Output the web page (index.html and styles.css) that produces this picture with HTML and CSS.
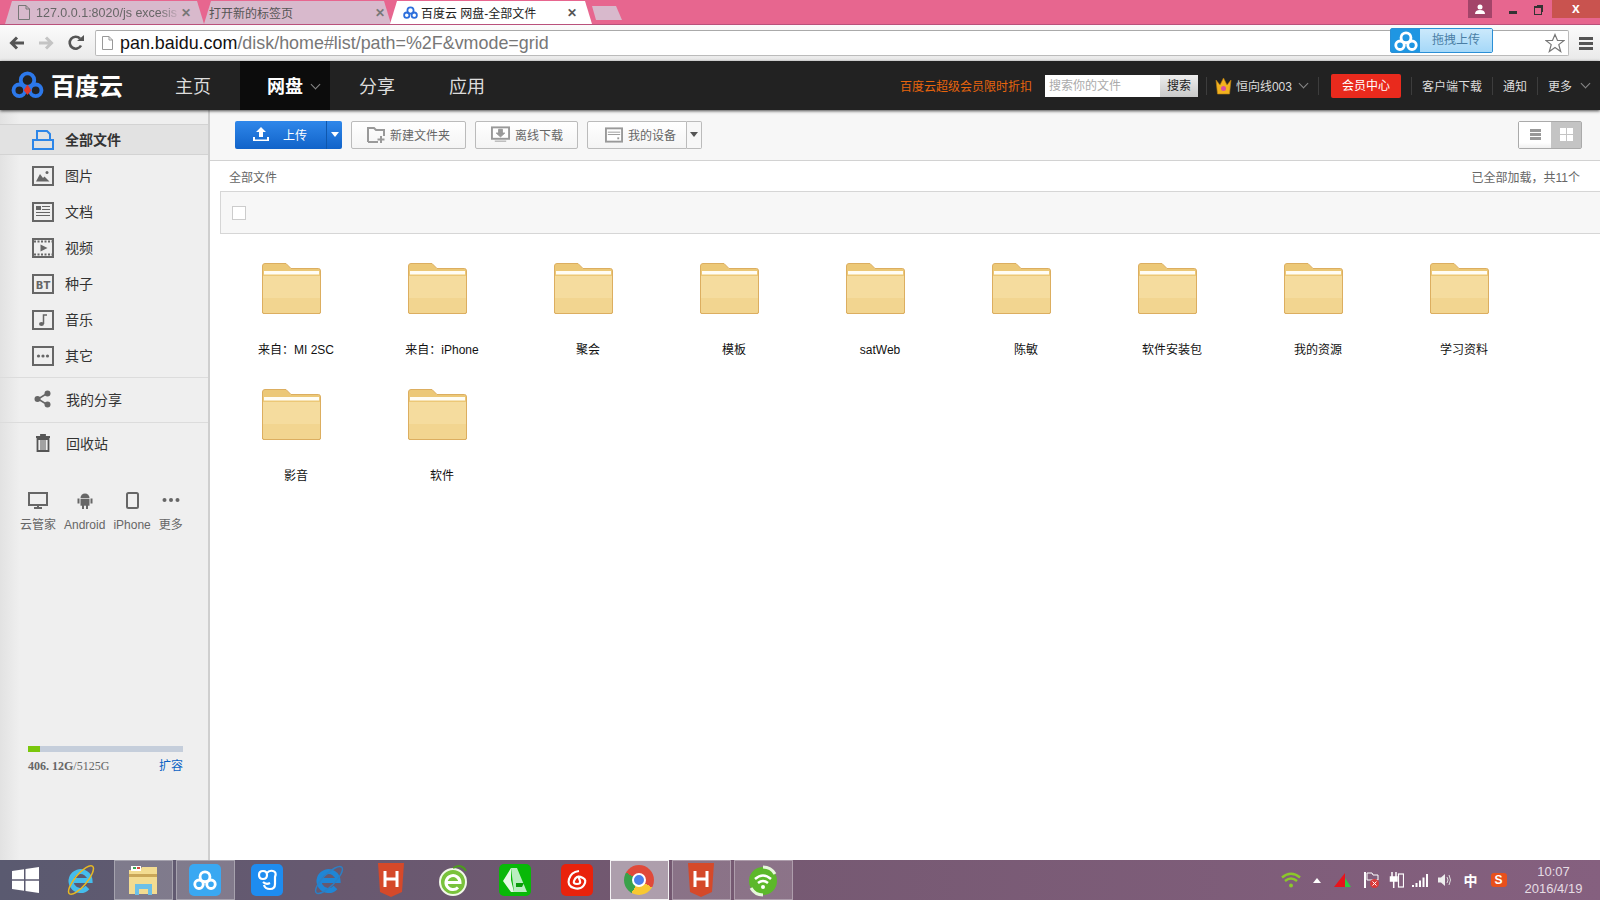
FILE: index.html
```html
<!DOCTYPE html>
<html lang="zh-CN">
<head>
<meta charset="UTF-8">
<title>百度云 网盘-全部文件</title>
<link rel="stylesheet" href="styles.css">
</head>
<body>

<svg class="defs" width="0" height="0">
    <symbol id="cloud" viewBox="0 0 34 28">
        <circle cx="8.500" cy="20" r="6" fill="none" stroke="currentColor" stroke-width="4"/>
        <circle cx="25.500" cy="20" r="6" fill="none" stroke="currentColor" stroke-width="4"/>
        <circle cx="17" cy="9.500" r="7" fill="none" stroke="currentColor" stroke-width="4"/>
    </symbol>
    <symbol id="folder" viewBox="0 0 59 51">
        <path d="M.5 3Q.5.5 3 .5H24L29 5.500H56.500Q58.500 5.500 58.500 8V49Q58.500 50.500 57 50.500H2Q.5 50.500.5 49Z" fill="#ecc877" stroke="#dcae60"/>
        <rect x="1" y="13" width="57" height="37" fill="#f5dc9e"/>
        <rect x="1" y="35" width="57" height="15" fill="#f2d590"/>
        <rect x="2" y="8" width="55" height="3.500" fill="#fffdf5"/>
        <path d="M.5 8V49Q.5 50.500 2 50.500H57Q58.500 50.500 58.500 49V8" fill="none" stroke="#dcae60"/>
    </symbol>
    <symbol id="frame" viewBox="0 0 22 20">
        <rect x="1" y="1" width="20" height="18" fill="none" stroke="currentColor" stroke-width="2"/>
    </symbol>
    <symbol id="html" viewBox="0 0 26 34">
        <path d="M0 0H26L24 29L13 34L2 29Z" fill="#d5492a"/>
        <path d="M7 8V24M19 8V24M7 16H19" fill="none" stroke="#fff" stroke-width="3"/>
    </symbol>
</svg>

<div class="tabs">
    <div class="tab tab-first">
        <svg class="tab-icon" width="12" height="15" viewBox="0 0 12 15"><path d="M.5.5H8L11.500 4V14.500H.5Z" fill="none" stroke="#777"/><path d="M8 .5V4H11.500" fill="none" stroke="#777"/></svg>
        <span class="tab-title tab-fade">127.0.0.1:8020/js excesis</span>
        <span class="tab-close">✕</span>
    </div>
    <div class="tab tab-second">
        <span class="tab-title">打开新的标签页</span>
        <span class="tab-close">✕</span>
    </div>
    <div class="tab tab-active">
        <svg class="tab-logo" width="15" height="13"><use href="#cloud"/></svg>
        <span class="tab-title">百度云 网盘-全部文件</span>
        <span class="tab-close">✕</span>
    </div>
    <div class="tab-new"></div>
    <div class="win-controls">
        <div class="win-profile">
            <svg width="10" height="10" viewBox="0 0 10 10"><circle cx="5" cy="3" r="2.500" fill="#fff"/><path d="M0 10Q0 6 5 6T10 10Z" fill="#fff"/></svg>
        </div>
        <div class="win-min"></div>
        <div class="win-restore"></div>
        <div class="win-close">x</div>
    </div>
</div>

<div class="toolbar">
    <svg class="tool-icon" width="16" height="14" viewBox="0 0 16 14"><path d="M15 7H3M8 1.500 2.500 7 8 12.500" fill="none" stroke="#555" stroke-width="3"/></svg>
    <svg class="tool-icon tool-forward" width="16" height="14" viewBox="0 0 16 14"><path d="M1 7H13M8 1.500 13.500 7 8 12.500" fill="none" stroke="#c4c4c4" stroke-width="3"/></svg>
    <svg class="tool-icon tool-reload" width="16" height="16" viewBox="0 0 16 16"><path d="M13 10.500A6 6 0 1 1 12 3.500" fill="none" stroke="#555" stroke-width="2.600"/><path d="M9 6H16V0Z" fill="#555"/></svg>
    <div class="address">
        <svg class="address-doc" width="11" height="14" viewBox="0 0 11 14"><path d="M.5.5H7L10.500 4V13.500H.5Z" fill="#fff" stroke="#999"/><path d="M7 .5V4H10.500" fill="none" stroke="#999"/></svg>
        <span class="url"><span class="url-host">pan.baidu.com</span>/disk/home#list/path=%2F&amp;vmode=grid</span>
        <svg class="star" width="20" height="20" viewBox="0 0 20 20"><path d="M10 1.500 12.500 7.500H19L13.800 11.600 15.700 18.500 10 14.500 4.300 18.500 6.200 11.600 1 7.500H7.500Z" fill="#fff" stroke="#777" stroke-width="1.200"/></svg>
        <div class="drag-upload">
            <div class="drag-logo"><svg width="24" height="20"><use href="#cloud"/></svg></div>
            <div class="drag-text">拖拽上传</div>
        </div>
    </div>
    <div class="menu-icon"><i></i><i></i><i></i></div>
</div>

<div class="nav">
    <div class="logo">
        <svg class="logo-mark" width="33" height="27" viewBox="0 0 34 28">
            <use href="#cloud"/>
            <path d="M17 14 21 20 17 25 13 20Z" fill="#e0392b"/>
        </svg>
        <span class="logo-text">百度云</span>
    </div>
    <a class="nav-link">主页</a>
    <a class="nav-link nav-active">网盘<span class="chev nav-chev"></span></a>
    <a class="nav-link">分享</a>
    <a class="nav-link nav-last">应用</a>
    <div class="nav-right">
        <span class="promo">百度云超级会员限时折扣</span>
        <div class="search">
            <span class="search-input">搜索你的文件</span>
            <span class="search-btn">搜索</span>
        </div>
        <span class="nav-sep sep-narrow"></span>
        <svg class="crown" width="17" height="18" viewBox="0 0 17 18">
            <path d="M1 3 5 8 8.500 1 12 8 16 3 14.500 17H2.500Z" fill="#f2b21f" stroke="#b97d10" stroke-width=".6"/>
            <circle cx="8.500" cy="11.500" r="2.500" fill="#d84fa0"/>
        </svg>
        <span class="nav-text user-name">恒向线003</span>
        <span class="chev user-chev"></span>
        <span class="nav-sep sep-wide"></span>
        <span class="vip">会员中心</span>
        <span class="nav-sep"></span>
        <span class="nav-text">客户端下载</span>
        <span class="nav-sep"></span>
        <span class="nav-text">通知</span>
        <span class="nav-sep"></span>
        <span class="nav-text">更多</span>
        <span class="chev more-chev"></span>
    </div>
</div>

<div class="main">
    <div class="sidebar">
        <div class="side-item side-active">
            <svg class="side-icon" width="22" height="20" viewBox="0 0 22 20"><path d="M5 10V1H15L18 4V10M1 10H21V19H1Z" fill="none" stroke="#2d86e8" stroke-width="2"/></svg>
            全部文件
        </div>
        <div class="side-group">
            <div class="side-item">
                <svg class="side-icon" width="22" height="20" viewBox="0 0 22 20"><use href="#frame"/><path d="M4 15.500 8 8 11 12 12.500 10.500 17.500 15.500Z" fill="currentColor"/><circle cx="15" cy="6.500" r="1.500" fill="currentColor"/></svg>
                图片
            </div>
            <div class="side-item">
                <svg class="side-icon" width="22" height="20" viewBox="0 0 22 20"><use href="#frame"/><rect x="4" y="4" width="5" height="4" fill="currentColor"/><path d="M10 4.500H18M10 7.500H18M4 10.500H18M4 13.500H18" stroke="currentColor"/></svg>
                文档
            </div>
            <div class="side-item">
                <svg class="side-icon" width="22" height="20" viewBox="0 0 22 20"><use href="#frame"/><path d="M2 3.500H20M2 16.500H20" stroke="currentColor" stroke-width="2" stroke-dasharray="2 1.500"/><path d="M8.500 6.500 15.500 10 8.500 13.500Z" fill="currentColor"/></svg>
                视频
            </div>
            <div class="side-item">
                <svg class="side-icon" width="22" height="20" viewBox="0 0 22 20"><use href="#frame"/><text class="bt-text" x="11" y="14.500" text-anchor="middle">BT</text></svg>
                种子
            </div>
            <div class="side-item">
                <svg class="side-icon" width="22" height="20" viewBox="0 0 22 20"><use href="#frame"/><ellipse cx="9.500" cy="14" rx="2.500" ry="2" fill="currentColor"/><path d="M11.500 14V5H15" fill="none" stroke="currentColor" stroke-width="1.500"/></svg>
                音乐
            </div>
            <div class="side-item">
                <svg class="side-icon" width="22" height="20" viewBox="0 0 22 20"><use href="#frame"/><circle cx="6.500" cy="10" r="1.600" fill="currentColor"/><circle cx="11" cy="10" r="1.600" fill="currentColor"/><circle cx="15.500" cy="10" r="1.600" fill="currentColor"/></svg>
                其它
            </div>
        </div>
        <div class="side-share">
            <svg class="side-icon side-icon-small" width="22" height="18" viewBox="0 0 22 18"><path d="M15 3.500 6 9 15 14.500" fill="none" stroke="currentColor" stroke-width="1.500"/><circle cx="15.500" cy="3.500" r="3" fill="currentColor"/><circle cx="5.500" cy="9" r="3" fill="currentColor"/><circle cx="15.500" cy="14.500" r="3" fill="currentColor"/></svg>
            我的分享
        </div>
        <div class="side-trash">
            <svg class="side-icon side-icon-small" width="22" height="18" viewBox="0 0 22 18"><path d="M4 3H18M9 3V1H13V3" fill="none" stroke="#555" stroke-width="1.800"/><path d="M5.500 5H16.500V17H5.500Z" fill="none" stroke="#555" stroke-width="1.800"/><path d="M9 6V16M11 6V16M13 6V16" stroke="#555"/></svg>
            回收站
        </div>
        <div class="apps">
            <div class="app">
                <svg width="20" height="17" viewBox="0 0 20 17"><rect x="1" y="1" width="18" height="12" fill="none" stroke="#666" stroke-width="2"/><path d="M6 16H14M10 13V16" stroke="#666" stroke-width="2"/></svg>
                <span>云管家</span>
            </div>
            <div class="app">
                <svg width="16" height="17" viewBox="0 0 16 17"><path d="M3.500 6A4.500 4.500 0 0 1 12.500 6Z" fill="#666"/><rect x="3.500" y="6.700" width="9" height="7" fill="#666"/><path d="M6 13V17M10 13V17M1.500 6.500V11.500M14.500 6.500V11.500" stroke="#666" stroke-width="2"/></svg>
                <span>Android</span>
            </div>
            <div class="app">
                <svg width="13" height="17" viewBox="0 0 13 17"><rect x="1" y="1" width="11" height="15" rx="1.500" fill="none" stroke="#666" stroke-width="2"/></svg>
                <span>iPhone</span>
            </div>
            <div class="app">
                <svg width="18" height="17" viewBox="0 0 18 17"><circle cx="2.500" cy="8" r="2" fill="#666"/><circle cx="9" cy="8" r="2" fill="#666"/><circle cx="15.500" cy="8" r="2" fill="#666"/></svg>
                <span>更多</span>
            </div>
        </div>
        <div class="storage">
            <div class="storage-bar"><div class="storage-used"></div></div>
            <div class="storage-info">
                <span class="storage-text"><b>406. 12G</b>/5125G</span>
                <a class="expand">扩容</a>
            </div>
        </div>
    </div>

    <div class="content">
        <div class="actions">
            <div class="btn-upload">
                <span class="upload-main">
                    <svg width="18" height="15" viewBox="0 0 18 15"><path d="M9 0 14 5H11V10H7V5H4ZM1 10V14H17V10" fill="#fff"/><path d="M3 10V12.500H15V10" fill="#1a71d6"/></svg>
                    <span class="upload-label">上传</span>
                </span>
                <span class="upload-drop"><i class="caret caret-white"></i></span>
            </div>
            <div class="btn btn-folder">
                <svg width="18" height="16" viewBox="0 0 18 16"><path d="M1 15V1H7L9 3H17V9M11 15H1" fill="none" stroke="#999" stroke-width="2"/><path d="M14 9V16M10.500 12.500H17.500" stroke="#999" stroke-width="2"/></svg>
                新建文件夹
            </div>
            <div class="btn btn-offline">
                <svg width="19" height="17" viewBox="0 0 20 17"><rect x="1" y="1" width="18" height="12" fill="#fff" stroke="#999" stroke-width="2"/><path d="M8 3H12V7H14.500L10 11 5.500 7H8ZM4 15.500H16" fill="#999" stroke="#999"/></svg>
                离线下载
            </div>
            <div class="btn-device">
                <span class="btn device-main">
                    <svg width="18" height="16" viewBox="0 0 19 16"><rect x="1" y="1" width="17" height="14" fill="#fff" stroke="#999" stroke-width="2"/><path d="M3 5H16M3 7.500H16" stroke="#999"/><rect x="13" y="10.500" width="2" height="2" fill="#999"/></svg>
                    我的设备
                </span>
                <span class="device-drop"><i class="caret"></i></span>
            </div>
            <div class="view-toggle">
                <span class="view-list"><i></i><i></i><i></i></span>
                <span class="view-grid"><i></i><i></i><i></i><i></i></span>
            </div>
        </div>
        <div class="crumbs">
            <span>全部文件</span>
            <span>已全部加载&#xFF0C;共11个</span>
        </div>
        <div class="select-bar"><span class="checkbox"></span></div>
        <div class="grid">
            <div class="file"><svg width="59" height="51"><use href="#folder"/></svg><span>来自&#xFF1A;MI 2SC</span></div>
            <div class="file"><svg width="59" height="51"><use href="#folder"/></svg><span>来自&#xFF1A;iPhone</span></div>
            <div class="file"><svg width="59" height="51"><use href="#folder"/></svg><span>聚会</span></div>
            <div class="file"><svg width="59" height="51"><use href="#folder"/></svg><span>模板</span></div>
            <div class="file"><svg width="59" height="51"><use href="#folder"/></svg><span>satWeb</span></div>
            <div class="file"><svg width="59" height="51"><use href="#folder"/></svg><span>陈敏</span></div>
            <div class="file"><svg width="59" height="51"><use href="#folder"/></svg><span>软件安装包</span></div>
            <div class="file"><svg width="59" height="51"><use href="#folder"/></svg><span>我的资源</span></div>
            <div class="file"><svg width="59" height="51"><use href="#folder"/></svg><span>学习资料</span></div>
            <div class="file"><svg width="59" height="51"><use href="#folder"/></svg><span>影音</span></div>
            <div class="file"><svg width="59" height="51"><use href="#folder"/></svg><span>软件</span></div>
        </div>
    </div>
</div>

<div class="taskbar">
    <div class="start">
        <svg width="27" height="26" viewBox="0 0 27 26"><path d="M0 4 12 2.300V12.300H0ZM13.500 2 27 0V12.300H13.500ZM0 13.700H12V23.700L0 22ZM13.500 13.700H27V26L13.500 24Z" fill="#fff"/></svg>
    </div>
    <div class="task">
        <svg width="32" height="32" viewBox="0 0 32 32"><path d="M7 16.500H25A9.500 9.500 0 1 0 22.500 23.500" fill="none" stroke="#45bdec" stroke-width="5"/><ellipse cx="16" cy="16" rx="18" ry="6" transform="rotate(-50 16 16)" fill="none" stroke="#e8b923" stroke-width="1.500"/></svg>
    </div>
    <div class="task task-open">
        <svg width="30" height="32" viewBox="0 0 30 32"><path d="M1 6H12L14 3H29V30H1Z" fill="#f3dc91"/><rect x="3" y="2" width="10" height="5" fill="#fff"/><rect x="5" y="3" width="3" height="2" fill="#3aa655"/><rect x="9" y="3" width="3" height="2" fill="#d9473a"/><rect x="1" y="10" width="28" height="3" fill="#caa758"/><path d="M7 20H24V31H20V25H11V31H7Z" fill="#6cc0e8"/></svg>
    </div>
    <div class="task task-open">
        <div class="app-tile tile-baidu"><svg width="24" height="20"><use href="#cloud"/></svg></div>
    </div>
    <div class="task">
        <div class="app-tile tile-blue">
            <svg width="24" height="24" viewBox="0 0 24 24"><path d="M4 7Q4 3 8 3T12 7 8 11 4 7ZM12 5Q14 2 18 3T20 9V16Q20 21 15 21T9 17M8 14Q11 17 15 15" fill="none" stroke="#fff" stroke-width="2.200"/></svg>
        </div>
    </div>
    <div class="task">
        <svg width="32" height="32" viewBox="0 0 32 32"><path d="M7 16.500H25A9.500 9.500 0 1 0 22.500 23.500" fill="none" stroke="#1f86d6" stroke-width="5"/><ellipse cx="16" cy="16" rx="18" ry="6" transform="rotate(-45 16 16)" fill="none" stroke="#2c7fc4" stroke-width="1.500"/></svg>
    </div>
    <div class="task"><svg width="26" height="34"><use href="#html"/></svg></div>
    <div class="task">
        <svg width="30" height="34" viewBox="0 0 30 34"><circle cx="15" cy="19" r="13" fill="#79c23c" stroke="#f2f8ea" stroke-width="2"/><path d="M8 19.500H22A7 7 0 1 0 20 24.500" fill="none" stroke="#fff" stroke-width="3"/><path d="M15 5Q24 0 28 8" fill="none" stroke="#4d9a1f" stroke-width="2"/></svg>
    </div>
    <div class="task">
        <div class="app-tile tile-green">
            <svg width="26" height="26" viewBox="0 0 26 26"><path d="M9 1H15L25 25H12Z" fill="#b9eec0"/><path d="M9 1 1 14 9 25H12L9 13Z" fill="#e6f9e6"/><path d="M14 16H22L20 20H14Z" fill="#0a9c0a"/></svg>
        </div>
    </div>
    <div class="task">
        <div class="app-tile tile-red">
            <svg width="24" height="24" viewBox="0 0 24 24"><path d="M14 3Q6 4 4 11T9 20 19 17 18 10 12 9 9 13 12 16 15 13 13 8" fill="none" stroke="#fff" stroke-width="2.200"/></svg>
        </div>
    </div>
    <div class="task task-current">
        <div class="chrome"><span class="chrome-dot"></span></div>
    </div>
    <div class="task task-open task-pink"><svg width="26" height="34"><use href="#html"/></svg></div>
    <div class="task task-open task-pink">
        <svg width="30" height="34" viewBox="0 0 30 34"><circle cx="15" cy="18" r="14" fill="#5cb82a"/><path d="M15 4A14 14 0 0 1 27 11" fill="none" stroke="#e7f6dc" stroke-width="3"/><path d="M15 32A14 14 0 0 1 3 25" fill="none" stroke="#e7f6dc" stroke-width="3"/><path d="M7 16Q15 9 23 16M10 20Q15 16 20 20" fill="none" stroke="#fff" stroke-width="2.500"/><circle cx="15" cy="24" r="2" fill="#fff"/></svg>
    </div>
    <div class="tray">
        <svg class="tray-wifi" width="20" height="16" viewBox="0 0 20 16"><path d="M1 5.500Q10-2 19 5.500M4 9Q10 4 16 9" fill="none" stroke="#8bc82a" stroke-width="2.400"/><circle cx="10" cy="13.500" r="2" fill="#8bc82a"/></svg>
        <svg class="tray-caret" width="8" height="5" viewBox="0 0 8 5"><path d="M4 0 8 5H0Z" fill="#fff"/></svg>
        <svg class="tray-net" width="17" height="14" viewBox="0 0 17 14"><path d="M0 14 11 0V14Z" fill="#e8141c"/><path d="M11 5 17 14H11Z" fill="#2ecc40"/></svg>
        <svg class="tray-flag" width="15" height="16" viewBox="0 0 15 16"><path d="M1 0V16" stroke="#fff" stroke-width="2"/><path d="M3 1H8L9 3H14V8H3Z" fill="none" stroke="#fff"/><circle cx="10.500" cy="11.500" r="4.500" fill="#d83a3a"/><path d="M8.500 9.500 12.500 13.500M12.500 9.500 8.500 13.500" stroke="#fff"/></svg>
        <svg class="tray-batt" width="15" height="16" viewBox="0 0 15 16"><path d="M3 0V5M7 0V5M1.500 5H8V9H1.500ZM4.700 9V16" stroke="#fff" stroke-width="1.500" fill="#fff"/><rect x="9.500" y="2" width="5" height="13" fill="none" stroke="#fff" stroke-width="1.200"/></svg>
        <svg class="tray-signal" width="16" height="13" viewBox="0 0 16 13"><path d="M1 13V11M4.500 13V9M8 13V6.500M11.500 13V3.500M15 13V0" stroke="#fff" stroke-width="2"/></svg>
        <svg class="tray-vol" width="14" height="14" viewBox="0 0 14 14"><path d="M1 4.500H4L8 1V13L4 9.500H1Z" fill="#eee"/><path d="M10 4Q12 7 10 10M12 2Q15 7 12 12" fill="none" stroke="#ddd"/></svg>
        <span class="tray-ime">中</span>
        <span class="tray-sogou">S</span>
        <div class="clock">
            <span>10:07</span>
            <span>2016/4/19</span>
        </div>
    </div>
</div>

</body>
</html>
```

FILE: styles.css
```css
* {
    box-sizing: border-box;
}
html, body {
    height: 100%;
}
body {
    margin: 0;
    display: flex;
    flex-direction: column;
    height: 900px;
    overflow: hidden;
    font-family: "Liberation Sans", "Noto Sans CJK SC", sans-serif;
    font-size: 12px;
    color: #333;
    background-color: #fff;
}
a {
    cursor: pointer;
}
i {
    display: block;
}
.defs {
    position: absolute;
}

/* browser window */
.tabs {
    display: flex;
    align-items: flex-end;
    flex: none;
    height: 24px;
    padding-left: 5px;
    background-color: #e7668f;
}
.tab {
    display: flex;
    align-items: center;
    height: 23px;
    font-size: 12px;
    color: #555;
    background-color: #d8b9cc;
    clip-path: polygon(0 100%, 7px 0, calc(100% - 7px) 0, 100% 100%);
}
.tab-first {
    width: 199px;
    padding-left: 13px;
}
.tab-second {
    width: 187px;
    padding-left: 5px;
}
.tab-active {
    width: 202px;
    margin-left: -1px;
    padding-left: 13px;
    color: #222;
    background-color: #fff;
}
.tab-icon {
    flex: none;
    margin-right: 6px;
}
.tab-logo {
    flex: none;
    margin-right: 3px;
    color: #2d6fdc;
}
.tab-title {
    flex: 1;
    min-width: 0;
    white-space: nowrap;
}
.tab-fade {
    font-size: 12.500px;
    color: #666;
    -webkit-mask-image: linear-gradient(90deg, #000 85%, transparent);
    mask-image: linear-gradient(90deg, #000 85%, transparent);
}
.tab-close {
    flex: none;
    width: 12px;
    margin-right: 11px;
    font-size: 12px;
    font-weight: bold;
    color: #777;
}
.tab-second .tab-close {
    margin-right: 4px;
}
.tab-active .tab-close {
    margin-right: 13px;
    color: #555;
}
.tab-new {
    width: 30px;
    height: 14px;
    margin: 0 0 4px 0;
    background-color: #d8b9cc;
    clip-path: polygon(4px 100%, 0 0, calc(100% - 6px) 0, 100% 100%);
}
.win-controls {
    display: flex;
    align-self: flex-start;
    margin-left: auto;
    height: 18px;
}
.win-profile {
    display: flex;
    align-items: center;
    justify-content: center;
    width: 24px;
    background-color: #a34469;
}
.win-min {
    width: 8px;
    height: 3px;
    margin: 11px 17px 0 17px;
    background-color: #333;
}
.win-restore {
    width: 8px;
    height: 9px;
    margin: 6px 10px 0 0;
    border: 1px solid #333;
    border-top-width: 2px;
    box-shadow: 2px -2px 0 -1px #333;
}
.win-close {
    width: 48px;
    font-size: 14px;
    font-weight: bold;
    line-height: 17px;
    text-align: center;
    color: #fff;
    background-color: #c9534f;
}

.toolbar {
    display: flex;
    align-items: center;
    flex: none;
    height: 37px;
    border-top: 1px solid #b9517b;
    background: linear-gradient(#fbfbfb, #e9e9e9);
}
.tool-icon {
    flex: none;
    margin-left: 9px;
}
.tool-forward {
    margin-left: 13px;
}
.tool-reload {
    margin-left: 14px;
}
.address {
    position: relative;
    display: flex;
    align-items: center;
    width: 1474px;
    height: 26px;
    margin-left: 11px;
    padding-left: 6px;
    border: 1px solid #bbb;
    border-top-color: #aaa;
    border-radius: 2px;
    background-color: #fff;
}
.address-doc {
    flex: none;
}
.url {
    margin-left: 7px;
    font-size: 17.900px;
    color: #777;
    white-space: nowrap;
}
.url-host {
    color: #111;
}
.star {
    margin-left: auto;
    margin-right: 3px;
}
.drag-upload {
    position: absolute;
    top: -3px;
    left: 1294px;
    display: flex;
    width: 103px;
    height: 25px;
    border: 1px solid #2a8fd6;
    border-radius: 2px;
}
.drag-logo {
    display: flex;
    align-items: center;
    justify-content: center;
    width: 29px;
    color: #fff;
    background-color: #1f96e2;
}
.drag-text {
    flex: 1;
    font-size: 12px;
    line-height: 23px;
    text-align: center;
    color: #4a7ea5;
    background: linear-gradient(#cbe9fb, #a5d8f8);
}
.menu-icon {
    flex: none;
    width: 14px;
    margin-left: 10px;
}
.menu-icon i {
    height: 3px;
    margin: 2px 0;
    background-color: #555;
}

/* site header */
.nav {
    position: relative;
    z-index: 2;
    display: flex;
    align-items: stretch;
    flex: none;
    height: 49px;
    background-color: #222;
    box-shadow: 0 1px 3px rgba(0, 0, 0, 0.7);
}
.logo {
    display: flex;
    align-items: center;
    flex: none;
    width: 148px;
    padding: 0 0 2px 11px;
    color: #2c78ea;
}
.logo-text {
    margin-left: 7px;
    font-size: 24px;
    font-weight: bold;
    color: #fff;
}
.nav-link {
    position: relative;
    display: flex;
    align-items: center;
    justify-content: center;
    width: 90px;
    margin-right: 2px;
    padding-bottom: 2px;
    font-size: 18px;
    color: #ddd;
}
.nav-active {
    font-weight: bold;
    color: #fff;
    background-color: #0c0c0c;
}
.nav-last {
    margin-left: -2px;
}
.chev {
    display: block;
    width: 7px;
    height: 7px;
    border-right: 1px solid #888;
    border-bottom: 1px solid #888;
    transform: rotate(45deg);
}
.nav-chev {
    position: absolute;
    top: 20px;
    right: 11px;
}
.nav-right {
    display: flex;
    align-items: center;
    margin-left: auto;
    padding-right: 11px;
}
.promo {
    color: #e9650c;
}
.search {
    display: flex;
    width: 153px;
    height: 22px;
    margin-left: 13px;
    line-height: 22px;
    background-color: #fff;
}
.search-input {
    flex: 1;
    padding-left: 4px;
    color: #aaa;
}
.search-btn {
    width: 38px;
    text-align: center;
    color: #222;
    background: linear-gradient(#eee, #c9c9c9);
}
.nav-sep {
    width: 1px;
    height: 18px;
    margin: 0 10px;
    background-color: #3d3d3d;
}
.sep-narrow {
    margin: 0 8px;
}
.crown {
    flex: none;
}
.nav-text {
    color: #ddd;
}
.user-name {
    margin-left: 4px;
}
.user-chev {
    margin: -5px 0 0 8px;
}
.sep-wide {
    margin: 0 12px 0 11px;
}
.vip {
    width: 70px;
    height: 24px;
    line-height: 24px;
    text-align: center;
    color: #fff;
    border-radius: 2px;
    background-color: #e92a1d;
}
.more-chev {
    margin: -5px 0 0 10px;
}

/* page body */
.main {
    display: flex;
    flex: 1;
    min-height: 0;
}
.sidebar {
    display: flex;
    flex-direction: column;
    flex: none;
    width: 210px;
    padding-top: 14px;
    border-right: 2px solid #cfcfcf;
    background: linear-gradient(90deg, #e2e2e2, #efefef 20px);
}
.side-item {
    display: flex;
    align-items: center;
    height: 36px;
    padding: 0 0 2px 32px;
    font-size: 14px;
    color: #333;
}
.side-item .side-icon {
    margin-top: 2px;
}
.side-active {
    height: 31px;
    font-weight: bold;
    color: #333;
    border-top: 1px solid #d3d3d3;
    border-bottom: 1px solid #d3d3d3;
    background-color: #e2e2e2;
}
.side-group {
    padding: 3px 0 3px;
    border-bottom: 1px solid #dcdcdc;
}
.side-icon {
    flex: none;
    margin-right: 11px;
    color: #666;
}
.side-icon-small {
    margin-right: 12px;
}
.bt-text {
    font-family: "DejaVu Sans", sans-serif;
    font-size: 10px;
    font-weight: bold;
    fill: #666;
}
.side-share {
    display: flex;
    align-items: center;
    height: 45px;
    padding: 0 0 2px 32px;
    font-size: 14px;
    border-bottom: 1px solid #dcdcdc;
}
.side-trash {
    display: flex;
    align-items: center;
    height: 42px;
    padding: 0 0 2px 32px;
    font-size: 14px;
}
.apps {
    display: flex;
    gap: 8px;
    margin-top: 27px;
    padding-left: 20px;
}
.app {
    display: flex;
    flex-direction: column;
    align-items: center;
    gap: 8px;
    line-height: 17px;
    color: #666;
}
.storage {
    margin-top: auto;
    padding: 0 25px 85px 28px;
}
.storage-bar {
    height: 6px;
    background-color: #c5cedb;
}
.storage-used {
    width: 12px;
    height: 100%;
    background-color: #7ac70c;
}
.storage-info {
    display: flex;
    align-items: center;
    justify-content: space-between;
    margin-top: 5px;
    line-height: 18px;
}
.storage-text {
    font-family: "Liberation Serif", serif;
    font-size: 12px;
    color: #666;
}
.expand {
    color: #0a62c4;
}

.content {
    flex: 1;
    min-width: 0;
    display: flex;
    flex-direction: column;
}
.actions {
    display: flex;
    align-items: center;
    flex: none;
    height: 51px;
    padding: 0 18px 1px 25px;
    border-bottom: 1px solid #d2d2d2;
    background-color: #f7f7f7;
}
.btn-upload {
    display: flex;
    width: 107px;
    height: 28px;
    border-radius: 2px;
    background: linear-gradient(#2f87ea, #1163c9);
}
.upload-main {
    display: flex;
    align-items: center;
    width: 92px;
    padding-left: 17px;
    color: #fff;
    border-right: 1px solid #0f57ad;
}
.upload-label {
    margin-left: 13px;
}
.upload-drop {
    display: flex;
    align-items: center;
    justify-content: center;
    flex: 1;
}
.caret {
    width: 0;
    height: 0;
    border-left: 4px solid transparent;
    border-right: 4px solid transparent;
    border-top: 5px solid #555;
}
.caret-white {
    border-top-color: #fff;
}
.btn {
    display: flex;
    align-items: center;
    gap: 5px;
    height: 28px;
    color: #666;
    border: 1px solid #bbb;
    border-radius: 2px;
    background: linear-gradient(#fff, #f4f4f4);
}
.btn-folder {
    width: 115px;
    margin-left: 9px;
    padding-left: 15px;
}
.btn-offline {
    width: 103px;
    margin-left: 9px;
    padding-left: 15px;
}
.btn-device {
    display: flex;
    width: 115px;
    margin-left: 9px;
}
.device-main {
    width: 100px;
    padding-left: 17px;
    border-radius: 2px 0 0 2px;
}
.device-drop {
    display: flex;
    align-items: center;
    justify-content: center;
    flex: 1;
    border: 1px solid #bbb;
    border-left: none;
    border-radius: 0 2px 2px 0;
    background-color: #f7f7f7;
}
.view-toggle {
    display: flex;
    width: 64px;
    height: 28px;
    margin-left: auto;
    border: 1px solid #aaa;
    border-radius: 2px;
}
.view-list {
    display: flex;
    flex-direction: column;
    align-items: center;
    justify-content: center;
    gap: 1px;
    width: 32px;
    background: linear-gradient(#fff 80%, #f0f0f0);
}
.view-list i {
    width: 11px;
    height: 3px;
    background-color: #999;
}
.view-grid {
    display: grid;
    grid-template-columns: 6px 6px;
    gap: 1px;
    align-content: center;
    justify-content: center;
    flex: 1;
    background-color: #c4c4c4;
}
.view-grid i {
    height: 6px;
    background-color: #fff;
}
.crumbs {
    display: flex;
    align-items: center;
    justify-content: space-between;
    flex: none;
    height: 30px;
    padding: 1px 20px 0 19px;
    color: #666;
}
.select-bar {
    display: flex;
    align-items: center;
    flex: none;
    height: 43px;
    margin-left: 10px;
    padding-left: 11px;
    border: 1px solid #d6d6d6;
    border-right: none;
    background-color: #f7f7f7;
}
.checkbox {
    width: 14px;
    height: 14px;
    border: 1px solid #ccc;
    background-color: #fff;
}
.grid {
    display: grid;
    grid-template-columns: repeat(9, 146px);
    grid-auto-rows: 126px;
    padding: 29px 0 0 13px;
}
.file {
    display: flex;
    flex-direction: column;
    align-items: center;
    gap: 28px;
    line-height: 17px;
    color: #111;
}
.file svg {
    align-self: flex-start;
    margin-left: 39px;
}

/* windows taskbar */
.taskbar {
    display: flex;
    align-items: center;
    gap: 3px;
    flex: none;
    height: 40px;
    background: linear-gradient(90deg, #5a5a70, #735870 40%, #85607f);
}
.start {
    display: flex;
    justify-content: flex-end;
    width: 48.500px;
    padding-right: 10px;
}
.task {
    display: flex;
    align-items: center;
    justify-content: center;
    flex: none;
    width: 59px;
    height: 40px;
    border: 1px solid transparent;
}
.task-open {
    border-color: rgba(255, 255, 255, 0.3);
    background-color: rgba(255, 255, 255, 0.2);
}
.task-pink {
    background-color: rgba(255, 255, 255, 0.16);
}
.task-current {
    border-color: rgba(255, 255, 255, 0.85);
    background-color: rgba(255, 255, 255, 0.42);
}
.app-tile {
    display: flex;
    align-items: center;
    justify-content: center;
    width: 32px;
    height: 32px;
    border-radius: 5px;
}
.tile-baidu {
    color: #fff;
    background-color: #3aa8f2;
}
.tile-blue {
    background-color: #1e8cf0;
}
.tile-green {
    background-color: #08b808;
}
.tile-red {
    background-color: #e9220c;
}
.chrome {
    display: flex;
    align-items: center;
    justify-content: center;
    width: 30px;
    height: 30px;
    border-radius: 50%;
    background: conic-gradient(#e04a3a 0 120deg, #f8c832 120deg 210deg, #3aa14a 210deg 300deg, #e04a3a 300deg);
}
.chrome-dot {
    width: 14px;
    height: 14px;
    border: 2px solid #fff;
    border-radius: 50%;
    background-color: #4a80ea;
}
.tray {
    display: flex;
    align-items: center;
    flex: 1;
    height: 100%;
    padding-left: 485px;
}
.tray-wifi {
    flex: none;
}
.tray-caret {
    flex: none;
    margin-left: 12px;
}
.tray-net {
    flex: none;
    margin-left: 13px;
}
.tray-flag {
    flex: none;
    margin-left: 13px;
}
.tray-batt {
    flex: none;
    margin-left: 10px;
}
.tray-signal {
    flex: none;
    margin-left: 8px;
}
.tray-vol {
    flex: none;
    margin-left: 9px;
}
.tray-ime {
    margin-left: 13px;
    font-size: 14px;
    font-weight: bold;
    color: #fff;
}
.tray-sogou {
    width: 16px;
    height: 14px;
    margin-left: 13px;
    font-size: 12px;
    font-weight: bold;
    line-height: 14px;
    text-align: center;
    color: #fff;
    border-radius: 3px;
    background-color: #e8501c;
}
.clock {
    display: flex;
    flex-direction: column;
    align-items: center;
    width: 70px;
    margin-left: 12px;
    font-size: 13px;
    line-height: 17px;
    color: #e6dde4;
}
```
